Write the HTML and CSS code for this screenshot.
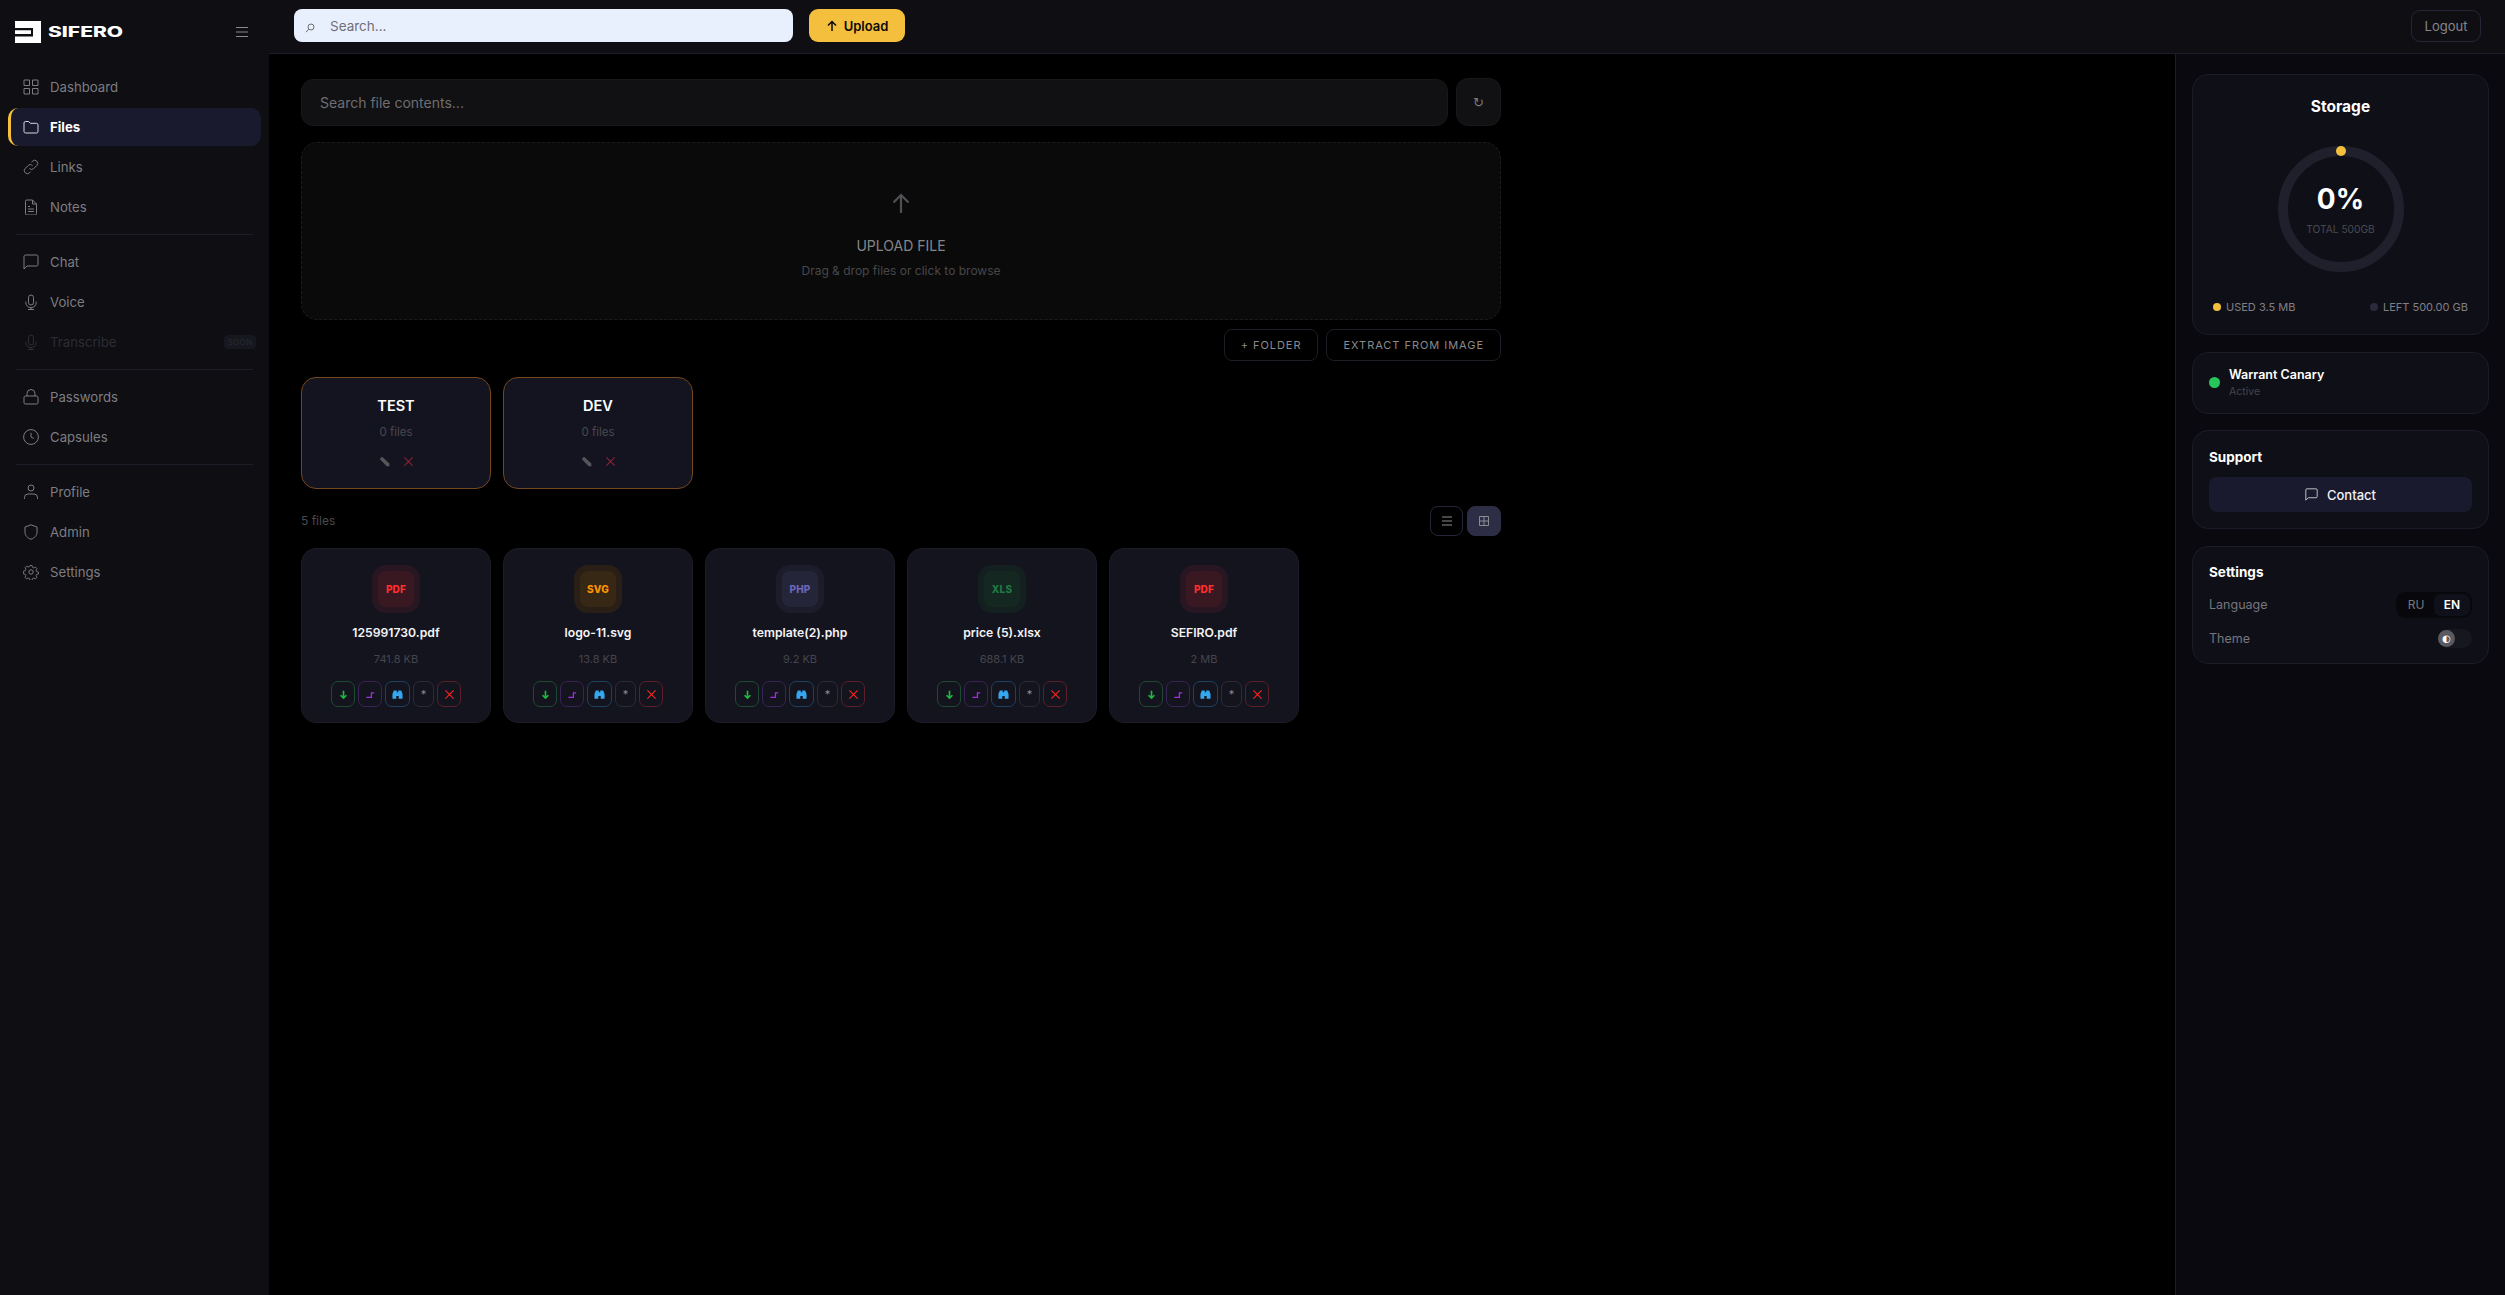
FILE: index.html
```html
<!DOCTYPE html>
<html lang="en">
<head>
<meta charset="utf-8">
<title>Sifero – Files</title>
<link rel="stylesheet" href="styles.css">
</head>
<body>
<svg class="defs" width="0" height="0" aria-hidden="true">
  <defs>
    <symbol id="i-down" viewBox="0 0 12 12"><path d="M6 2v8M2.800 6.800L6 10l3.200-3.200" fill="none" stroke="currentColor" stroke-width="1.800"/></symbol>
    <symbol id="i-share" viewBox="0 0 12 12"><path d="M1.500 9.200H7V4.200h3" fill="none" stroke="currentColor" stroke-width="1.400"/></symbol>
    <symbol id="i-bino" viewBox="0 0 12 12"><path d="M2 1.500h3.200v2h1.600v-2H10l1.500 4v5H7.300V7.500H4.700v3H.5v-5z" fill="currentColor"/></symbol>
    <symbol id="i-x" viewBox="0 0 12 12"><path d="M1.500 1.500l9 9M10.500 1.500l-9 9" fill="none" stroke="currentColor" stroke-width="1.200"/></symbol>
    <symbol id="i-pen" viewBox="0 0 12 12"><path d="M.8 3.300L3.300.8l8 7.500v3H8.300z" fill="currentColor"/></symbol>
    <symbol id="i-mag" viewBox="0 0 12 12"><circle cx="7.200" cy="4.800" r="3.600" fill="none" stroke="currentColor"/><path d="M4.500 7.500L1.200 11" fill="none" stroke="currentColor"/></symbol>
  </defs>
</svg>
<div class="app">
  <aside class="sidebar">
    <div class="brand">
      <svg class="logo" viewBox="0 0 26 22"><path fill="#fff" d="M0 0h26v22H0z"/><path fill="#0e0e13" d="M0 7h18v2.500H0zM0 13h18v2.500H0z"/><path fill="#0e0e13" d="M16 9h2v4h-2z"/><path fill="#fff" d="M0 9.500h16v3.500H0z"/></svg>
      <span class="brand-name">SIFERO</span>
      <svg class="burger" viewBox="0 0 12 12"><path d="M0 1.500h12M0 6h12M0 10.500h12" stroke="currentColor" fill="none"/></svg>
    </div>
    <nav class="nav">
      <a class="nav-item"><svg class="nav-icon" viewBox="0 0 16 16"><path d="M1 1h5.500v5.500H1zM9.500 1H15v5.500H9.500zM1 9.500h5.500V15H1zM9.500 9.500H15V15H9.500z"/></svg>Dashboard</a>
      <a class="nav-item active"><svg class="nav-icon" viewBox="0 0 16 16"><path d="M1 4a1.500 1.500 0 0 1 1.500-1.500h3.200l1.600 1.800h6.200A1.500 1.500 0 0 1 15 5.800v6.700a1.500 1.500 0 0 1-1.500 1.500h-11A1.500 1.500 0 0 1 1 12.500z"/></svg>Files</a>
      <a class="nav-item"><svg class="nav-icon" viewBox="0 0 16 16"><path d="M6.500 9.500a3 3 0 0 0 4.300 0l3-3a3 3 0 0 0-4.300-4.300L8.500 3.300M9.500 6.500a3 3 0 0 0-4.300 0l-3 3a3 3 0 0 0 4.300 4.300l1-1.100"/></svg>Links</a>
      <a class="nav-item"><svg class="nav-icon" viewBox="0 0 16 16"><path d="M2.500 2.300A1.300 1.300 0 0 1 3.800 1H9.500l4 4v9.700a1.300 1.300 0 0 1-1.300 1.300H3.800a1.300 1.300 0 0 1-1.300-1.300zM9.500 1v4h4M5 7.500h2M5 10h6M5 12.500h6"/></svg>Notes</a>
      <hr class="nav-sep">
      <a class="nav-item"><svg class="nav-icon" viewBox="0 0 16 16"><path d="M1 2.500A1.500 1.500 0 0 1 2.500 1h11A1.500 1.500 0 0 1 15 2.500v8a1.500 1.500 0 0 1-1.500 1.500H4l-3 3z"/></svg>Chat</a>
      <a class="nav-item"><svg class="nav-icon" viewBox="0 0 16 16"><path d="M5.500 3.500a2.500 2.500 0 0 1 5 0v5a2.500 2.500 0 0 1-5 0zM2.800 7.500v1a5.200 5.200 0 0 0 10.400 0v-1M8 13.700V15.500M5 15.500h6"/></svg>Voice</a>
      <a class="nav-item disabled"><svg class="nav-icon" viewBox="0 0 16 16"><path d="M5.500 3.500a2.500 2.500 0 0 1 5 0v5a2.500 2.500 0 0 1-5 0zM2.800 7.500v1a5.200 5.200 0 0 0 10.400 0v-1M8 13.700V15.500M5 15.500h6"/></svg>Transcribe<span class="soon">SOON</span></a>
      <hr class="nav-sep">
      <a class="nav-item"><svg class="nav-icon" viewBox="0 0 16 16"><path d="M1 8.500A1.500 1.500 0 0 1 2.500 7h11A1.500 1.500 0 0 1 15 8.500v5a1.500 1.500 0 0 1-1.500 1.500h-11A1.500 1.500 0 0 1 1 13.500zM4 7V4.500a4 4 0 0 1 8 0V7"/></svg>Passwords</a>
      <a class="nav-item"><svg class="nav-icon" viewBox="0 0 16 16"><circle cx="8" cy="8" r="7.400"/><path d="M8 3.800V8l2.800 1.500"/></svg>Capsules</a>
      <hr class="nav-sep">
      <a class="nav-item"><svg class="nav-icon" viewBox="0 0 16 16"><circle cx="8" cy="4" r="3"/><path d="M1.500 15v-1.500A3.500 3.500 0 0 1 5 10h6a3.500 3.500 0 0 1 3.500 3.500V15"/></svg>Profile</a>
      <a class="nav-item"><svg class="nav-icon" viewBox="0 0 16 16"><path d="M8 .8l6 2.200v5c0 3.600-2.500 6-6 7.300-3.500-1.300-6-3.700-6-7.300V3z"/></svg>Admin</a>
      <a class="nav-item"><svg class="nav-icon" viewBox="0 0 16 16"><circle cx="8" cy="8" r="2.200"/><path d="M6.800 .8h2.400l.4 2 1.500.7 1.800-1 1.700 1.700-1 1.800.6 1.500 2 .4v2.400l-2 .4-.6 1.500 1 1.800-1.700 1.700-1.800-1-1.500.6-.4 2H6.800l-.4-2-1.500-.6-1.800 1-1.700-1.700 1-1.800-.6-1.500-2-.4V6.900l2-.4.6-1.500-1-1.800 1.700-1.700 1.800 1 1.500-.7z" transform="translate(.8 .8) scale(.9)"/></svg>Settings</a>
    </nav>
  </aside>

  <div class="content">
    <header class="topbar">
      <div class="top-search"><svg class="top-search-icon"><use href="#i-mag"/></svg><span class="top-search-text">Search...</span></div>
      <button class="upload-btn"><svg class="upload-arrow" viewBox="0 0 12 12"><path d="M6 11V1.500M2 5.500l4-4 4 4" fill="none" stroke="currentColor" stroke-width="1.500"/></svg>Upload</button>
      <button class="logout-btn">Logout</button>
    </header>
    <div class="body">
      <main class="main">
        <div class="search-row">
          <div class="content-search">Search file contents...</div>
          <button class="refresh">↻</button>
        </div>
        <section class="dropzone">
          <svg class="drop-arrow" viewBox="0 0 18 20"><path d="M9 20V2M1.500 9.500L9 2l7.500 7.500" fill="none" stroke="currentColor" stroke-width="2.200"/></svg>
          <div class="drop-title">UPLOAD FILE</div>
          <div class="drop-sub">Drag &amp; drop files or click to browse</div>
        </section>
        <div class="tools">
          <button class="tool-btn">+ FOLDER</button>
          <button class="tool-btn">EXTRACT FROM IMAGE</button>
        </div>
        <div class="folders">
          <div class="folder">
            <div class="folder-name">TEST</div>
            <div class="folder-count">0 files</div>
            <div class="folder-actions"><svg class="f-pen"><use href="#i-pen"/></svg><svg class="f-x"><use href="#i-x"/></svg></div>
          </div>
          <div class="folder">
            <div class="folder-name">DEV</div>
            <div class="folder-count">0 files</div>
            <div class="folder-actions"><svg class="f-pen"><use href="#i-pen"/></svg><svg class="f-x"><use href="#i-x"/></svg></div>
          </div>
        </div>
        <div class="list-head">
          <span class="file-count">5 files</span>
          <div class="views">
            <button class="view-btn"><svg class="view-icon" viewBox="0 0 10 10"><path d="M0 1h10M0 5h10M0 9h10" stroke="currentColor" fill="none"/></svg></button>
            <button class="view-btn on"><svg class="view-icon" viewBox="0 0 10 10"><path d="M.5.500h9v9h-9zM5 .5v9M.5 5h9" stroke="currentColor" fill="none"/></svg></button>
          </div>
        </div>
        <div class="files">
          <article class="file">
            <div class="badge pdf">PDF</div>
            <div class="file-name">125991730.pdf</div>
            <div class="file-size">741.8 KB</div>
            <div class="acts"><span class="act a-d"><svg><use href="#i-down"/></svg></span><span class="act a-s"><svg><use href="#i-share"/></svg></span><span class="act a-b"><svg><use href="#i-bino"/></svg></span><span class="act a-m">*</span><span class="act a-x"><svg><use href="#i-x"/></svg></span></div>
          </article>
          <article class="file">
            <div class="badge svg">SVG</div>
            <div class="file-name">logo-11.svg</div>
            <div class="file-size">13.8 KB</div>
            <div class="acts"><span class="act a-d"><svg><use href="#i-down"/></svg></span><span class="act a-s"><svg><use href="#i-share"/></svg></span><span class="act a-b"><svg><use href="#i-bino"/></svg></span><span class="act a-m">*</span><span class="act a-x"><svg><use href="#i-x"/></svg></span></div>
          </article>
          <article class="file">
            <div class="badge php">PHP</div>
            <div class="file-name">template(2).php</div>
            <div class="file-size">9.2 KB</div>
            <div class="acts"><span class="act a-d"><svg><use href="#i-down"/></svg></span><span class="act a-s"><svg><use href="#i-share"/></svg></span><span class="act a-b"><svg><use href="#i-bino"/></svg></span><span class="act a-m">*</span><span class="act a-x"><svg><use href="#i-x"/></svg></span></div>
          </article>
          <article class="file">
            <div class="badge xls">XLS</div>
            <div class="file-name">price (5).xlsx</div>
            <div class="file-size">688.1 KB</div>
            <div class="acts"><span class="act a-d"><svg><use href="#i-down"/></svg></span><span class="act a-s"><svg><use href="#i-share"/></svg></span><span class="act a-b"><svg><use href="#i-bino"/></svg></span><span class="act a-m">*</span><span class="act a-x"><svg><use href="#i-x"/></svg></span></div>
          </article>
          <article class="file">
            <div class="badge pdf">PDF</div>
            <div class="file-name">SEFIRO.pdf</div>
            <div class="file-size">2 MB</div>
            <div class="acts"><span class="act a-d"><svg><use href="#i-down"/></svg></span><span class="act a-s"><svg><use href="#i-share"/></svg></span><span class="act a-b"><svg><use href="#i-bino"/></svg></span><span class="act a-m">*</span><span class="act a-x"><svg><use href="#i-x"/></svg></span></div>
          </article>
        </div>
      </main>
      <aside class="panel">
        <section class="card storage">
          <h3 class="storage-title">Storage</h3>
          <div class="ring">
            <svg class="ring-svg" viewBox="0 0 126 126"><circle cx="63" cy="63" r="58" fill="none" stroke="#20202d" stroke-width="10"/><circle cx="63" cy="5" r="5" fill="#f4bf3d"/></svg>
            <div class="ring-pct">0%</div>
            <div class="ring-total">TOTAL 500GB</div>
          </div>
          <div class="legend">
            <span class="legend-item"><i class="dot used"></i>USED 3.5 MB</span>
            <span class="legend-item"><i class="dot left"></i>LEFT 500.00 GB</span>
          </div>
        </section>
        <section class="card canary">
          <i class="canary-dot"></i>
          <div>
            <div class="canary-title">Warrant Canary</div>
            <div class="canary-sub">Active</div>
          </div>
        </section>
        <section class="card support">
          <h4 class="card-title">Support</h4>
          <button class="contact"><svg class="contact-icon" viewBox="0 0 16 16"><path d="M1 2.500A1.500 1.500 0 0 1 2.500 1h11A1.500 1.500 0 0 1 15 2.500v8a1.500 1.500 0 0 1-1.500 1.500H4l-3 3z"/></svg>Contact</button>
        </section>
        <section class="card settings">
          <h4 class="card-title">Settings</h4>
          <div class="set-row lang-row"><span>Language</span><div class="seg"><span class="seg-opt">RU</span><span class="seg-opt on">EN</span></div></div>
          <div class="set-row theme-row"><span>Theme</span><div class="toggle"><span class="knob">◐</span></div></div>
        </section>
      </aside>
    </div>
  </div>
</div>
</body>
</html>
```
FILE: styles.css
```css
* { box-sizing: border-box; }
html, body { margin: 0; height: 100%; background: #000; }
body { font-family: Inter, "Liberation Sans", sans-serif; color: #fff; overflow: hidden; }
button { font-family: inherit; cursor: pointer; }
.defs { position: absolute; }
.app { display: flex; height: 1295px; }

.sidebar { width: 269px; flex: none; background: #0e0e13; padding: 21px 8px 0 8px; }
.brand { display: flex; align-items: center; height: 22px; padding-left: 7px; padding-right: 13px; margin-bottom: 25px; }
.logo { width: 26px; height: 22px; flex: none; }
.brand-name { margin-left: 7px; font-size: 14px; font-weight: 800; transform: scaleX(1.5); transform-origin: left center; line-height: 22px; }
.burger { margin-left: auto; width: 12px; height: 12px; color: #8a8a8a; }
.nav { display: flex; flex-direction: column; gap: 2px; }
.nav-item { display: flex; align-items: center; height: 38px; padding-left: 15px; border-radius: 10px; color: #7d7d82; font-size: 13.200px; font-weight: 400; }
.nav-icon { width: 16px; height: 16px; margin-right: 11px; fill: none; stroke: currentColor; stroke-width: 1; flex: none; }
.nav-item.active { background: #1a1a2e; color: #fff; font-weight: 700; border-left: 3px solid #f4bf3d; padding-left: 12px; }
.nav-item.active .nav-icon { stroke: #d8d8de; }
.nav-item.disabled { color: #2d2d33; }
.soon { margin-left: auto; margin-right: 5px; width: 32px; height: 14px; background: #17171f; border-radius: 4px; font-size: 8px; line-height: 14px; text-align: center; color: #2a2a33; letter-spacing: .3px; }
.nav-sep { width: 237px; height: 1px; margin: 6px 0 6px 8px; border: 0; background: #1e1e28; }

.content { flex: 1; min-width: 0; display: flex; flex-direction: column; }
.topbar { height: 54px; flex: none; display: flex; align-items: center; background: #0e0e13; border-bottom: 1px solid #1c1c2c; padding: 0 24px 2px 25px; }
.top-search { width: 499px; height: 33px; background: #e8f0fe; border-radius: 8px; display: flex; align-items: center; padding-left: 11px; }
.top-search-icon { width: 10px; height: 10px; margin-right: 15px; color: #555; position: relative; top: 2px; }
.top-search-text { color: #6f6f78; font-size: 13.500px; }
.upload-btn { margin-left: 16px; width: 96px; height: 33px; border: 0; border-radius: 9px; background: #f4bf3d; color: #0a0a0a; font-size: 13px; font-weight: 600; display: flex; align-items: center; justify-content: center; gap: 6px; }
.upload-arrow { width: 12px; height: 12px; }
.logout-btn { margin-left: auto; width: 70px; height: 32px; background: transparent; border: 1px solid #26263a; border-radius: 9px; color: #86868a; font-size: 13px; }

.body { flex: 1; display: flex; min-height: 0; }
.main { width: 1906px; flex: none; padding: 24px 32px 0; }
.search-row { display: flex; gap: 8px; width: 1200px; }
.content-search { flex: 1; height: 47px; margin-top: 1px; background: #111113; border: 1px solid #18181b; border-radius: 12px; padding-left: 18px; display: flex; align-items: center; color: #6e6e72; font-size: 14px; }
.refresh { width: 45px; height: 48px; background: #111113; border: 1px solid #18181b; border-radius: 12px; color: #777; font-family: "DejaVu Sans", sans-serif; font-size: 13px; padding: 0; }
.dropzone { width: 1200px; height: 178px; margin-top: 16px; background: #0a0a0a; border: 1px dashed #1c1c20; border-radius: 16px; display: flex; flex-direction: column; align-items: center; padding-top: 50px; }
.drop-arrow { width: 18px; height: 20px; color: #505054; flex: none; }
.drop-title { margin-top: 23px; color: #85858a; font-size: 14px; line-height: 20px; }
.drop-sub { margin-top: 6px; color: #47474b; font-size: 12px; line-height: 18px; }
.tools { display: flex; justify-content: flex-end; gap: 8px; width: 1200px; margin-top: 9px; }
.tool-btn { height: 32px; padding: 0 16px; background: transparent; border: 1px solid #1d1d26; border-radius: 8px; color: #8a8a8e; font-size: 11px; letter-spacing: .96px; }
.folders { display: flex; gap: 12px; margin-top: 16px; }
.folder { width: 190px; height: 112px; background: #141421; border: 1px solid #74481c; border-radius: 15px; display: flex; flex-direction: column; align-items: center; padding-top: 18px; }
.folder-name { font-size: 14.500px; font-weight: 600; line-height: 20px; }
.folder-count { margin-top: 6px; font-size: 11.500px; line-height: 20px; color: #48484f; }
.folder-actions { margin-top: 14px; display: flex; gap: 13px; align-items: center; }
.f-pen { width: 11px; height: 11px; color: #55555a; }
.f-x { width: 11px; height: 11px; color: #8c2435; }
.list-head { display: flex; align-items: center; justify-content: space-between; width: 1200px; margin-top: 17px; height: 30px; }
.file-count { color: #4a4a50; font-size: 12px; position: relative; top: -1px; }
.views { display: flex; gap: 4px; }
.view-btn { width: 33px; height: 30px; padding: 0; background: transparent; border: 1px solid #26263a; border-radius: 8px; color: #8c8c90; display: flex; align-items: center; justify-content: center; }
.view-btn.on { width: 34px; background: #2d2d45; border-color: #2d2d45; }
.view-icon { width: 10px; height: 10px; }
.files { display: flex; gap: 12px; margin-top: 12px; }
.file { width: 190px; height: 175px; background: #14141f; border: 1px solid #1c1c28; border-radius: 15px; display: flex; flex-direction: column; align-items: center; padding-top: 22px; }
.badge { width: 36px; height: 36px; border-radius: 8px; display: flex; align-items: center; justify-content: center; font-size: 10px; font-weight: 800; letter-spacing: .2px; flex: none; }
.badge.pdf { background: #3a1822; box-shadow: 0 0 0 6px #281722; color: #ff2d2d; }
.badge.svg { background: #372715; box-shadow: 0 0 0 6px #2a1f17; color: #ff9500; }
.badge.php { background: #252539; box-shadow: 0 0 0 6px #1c1c2b; color: #6b65b8; }
.badge.xls { background: #142721; box-shadow: 0 0 0 6px #14201f; color: #1f7a45; }
.file-name { margin-top: 16px; font-size: 12.200px; font-weight: 600; line-height: 20px; color: #f4f4f6; }
.file-size { margin-top: 6px; font-size: 11px; line-height: 20px; color: #45454c; }
.acts { margin-top: 12px; display: flex; gap: 3px; }
.act { height: 26px; width: 24px; border: 1px solid; border-radius: 7px; display: flex; align-items: center; justify-content: center; }
.act svg { width: 11px; height: 11px; }
.a-d { color: #1fb83f; border-color: #1d4a31; }
.a-s { color: #a02de0; border-color: #3a2356; }
.a-b { width: 25px; color: #35a7ee; border-color: #1d4160; }
.a-m { width: 21px; color: #8a8a90; border-color: #2c2c38; font-size: 11px; }
.a-x { color: #ff2222; border-color: #5a1f28; }

.panel { flex: 1; min-width: 0; background: #09090f; border-left: 1px solid #1c1c2c; padding: 20px 16px 0 16px; display: flex; flex-direction: column; gap: 16.500px; }
.card { background: #0f0f17; border: 1px solid #1c1c28; border-radius: 16px; }
.storage { height: 261px; padding-top: 21px; text-align: center; }
.storage-title { margin: 0; font-size: 15.500px; font-weight: 700; line-height: 22px; }
.ring { position: relative; width: 126px; height: 126px; margin: 28px auto 0; }
.ring-svg { display: block; width: 126px; height: 126px; }
.ring-pct { position: absolute; left: 0; right: 0; top: 33px; font-size: 28px; line-height: 40px; font-weight: 700; }
.ring-total { position: absolute; left: 0; right: 0; top: 75px; font-size: 10.200px; line-height: 16px; color: #4a4a50; }
.legend { display: flex; justify-content: space-between; margin-top: 28px; padding: 0 20px; font-size: 11px; color: #808086; }
.legend-item { display: flex; align-items: center; gap: 5px; white-space: nowrap; }
.dot { width: 8px; height: 8px; border-radius: 50%; display: block; }
.dot.used { background: #f4bf3d; }
.dot.left { background: #2a2a3c; }
.canary { height: 62px; display: flex; align-items: center; padding-left: 16px; gap: 9px; }
.canary-dot { width: 11px; height: 11px; border-radius: 50%; background: #27c65a; flex: none; }
.canary-title { font-size: 12.500px; font-weight: 600; line-height: 18px; }
.canary-sub { font-size: 10.500px; line-height: 16px; color: #45454c; }
.support { height: 99px; padding: 16px; }
.card-title { margin: 0; font-size: 13.500px; font-weight: 700; line-height: 20px; }
.contact { width: 100%; height: 35px; margin-top: 10px; background: #1a1a2e; border: 0; border-radius: 8px; color: #f0f0f4; font-size: 13px; font-weight: 500; display: flex; align-items: center; justify-content: center; gap: 9px; }
.contact-icon { width: 13px; height: 13px; fill: none; stroke: #d0d0d6; stroke-width: 1.100; }
.settings { height: 118px; padding: 15px 16px 0; }
.set-row { display: flex; align-items: center; justify-content: space-between; color: #76767c; font-size: 12.500px; }
.lang-row { margin-top: 10px; height: 26px; }
.theme-row { margin-top: 11px; height: 19px; }
.seg { display: flex; width: 76px; height: 26px; padding: 2px; background: #08080c; border-radius: 9px; font-size: 12px; }
.seg-opt { flex: 1; display: flex; align-items: center; justify-content: center; color: #77777d; border-radius: 7px; }
.seg-opt.on { background: #10101a; color: #fff; font-weight: 600; }
.toggle { position: relative; width: 34px; height: 19px; background: #17171f; border-radius: 10px; }
.knob { position: absolute; left: 0; top: 1px; width: 17px; height: 17px; border-radius: 50%; background: #5a5a60; color: #fff; font-family: "DejaVu Sans", sans-serif; font-size: 10px; line-height: 17px; text-align: center; }
```
